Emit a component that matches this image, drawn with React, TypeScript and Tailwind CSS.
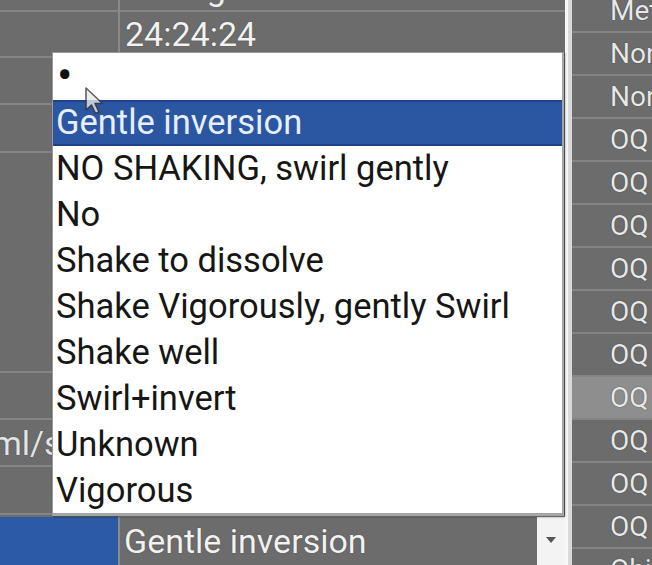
const options = [
  "Gentle inversion",
  "NO SHAKING, swirl gently",
  "No",
  "Shake to dissolve",
  "Shake Vigorously, gently Swirl",
  "Shake well",
  "Swirl+invert",
  "Unknown",
  "Vigorous",
];

const rightCells = [
  "Method",
  "None",
  "None",
  "OQ",
  "OQ",
  "OQ",
  "OQ",
  "OQ",
  "OQ",
  "OQ",
  "OQ",
  "OQ",
  "OQ",
  "Ohio",
];

// left column: [height, text]
const leftRows: [number, string][] = [
  [12, ""],
  [46, ""],
  [47, ""],
  [48, ""],
  [220, ""],
  [47, ""],
  [47, "ml/s"],
  [48, ""],
];

function Cursor() {
  return (
    <svg
      className="absolute left-[84px] top-[86px] opacity-80"
      width="22"
      height="30"
      viewBox="0 0 22 30"
    >
      <path
        d="M2 2 L2 24 L7.5 19 L11.5 27.5 L15 26 L11 17.5 L18.5 17.5 Z"
        fill="#e9e9e9"
        stroke="#3a3a3a"
        strokeWidth="1.6"
        strokeLinejoin="round"
      />
    </svg>
  );
}

export default function App() {
  return (
    <div className="relative w-[652px] h-[565px] overflow-hidden bg-[#6c6c6c] font-['Roboto','Liberation_Sans',sans-serif] text-[34px]">
      <div className="flex h-full">
        {/* left column */}
        <div className="flex flex-col w-[120px] border-r-[2px] border-[#8a8a8a]">
          {leftRows.map(([h, t], i) => (
            <div
              key={i}
              style={{ height: h }}
              className="flex items-center border-b-[2px] border-[#858585] overflow-hidden whitespace-nowrap text-[#e4e4e4] [text-shadow:0_0_1px_#333]"
            >
              {t && <span className="-ml-[8px] leading-none">{t}</span>}
            </div>
          ))}
          <div className="flex-1 mt-[2px] bg-[#2c5aa6]" />
        </div>

        {/* middle column */}
        <div className="flex flex-col w-[445px]">
          <div className="h-[12px] overflow-hidden border-b-[2px] border-[#858585]">
            <div className="-mt-[32px] pl-[5px] leading-[40px] text-[#eeeeee] whitespace-nowrap">
              Mixing method
            </div>
          </div>
          <div className="h-[46px] flex items-center pl-[5px] border-b-[2px] border-[#858585] text-[#f2f2f2] [text-shadow:0_0_1px_#333]">
            24:24:24
          </div>
          <div className="flex-1" />
          <div className="h-[50px] flex border-t-[2px] border-[#8a8a8a]">
            <div className="flex-1 flex items-center pl-[4px] text-[#f2f2f2] [text-shadow:0_0_1px_#333]">
              Gentle inversion
            </div>
            <div className="w-[28px] bg-[#f3f3f3] flex items-start justify-center pt-[20px]">
              <div className="w-0 h-0 border-l-[5px] border-r-[5px] border-t-[6px] border-l-transparent border-r-transparent border-t-[#555555]" />
            </div>
          </div>
        </div>

        {/* divider strip */}
        <div className="w-[7px] bg-[#d9d9d9] border-l-[3px] border-[#f7f7f7]" />

        {/* right column */}
        <div className="flex-1 overflow-hidden">
          <div className="-mt-[10px] flex flex-col">
            {rightCells.map((t, i) => (
              <div
                key={i}
                className={`h-[43px] shrink-0 flex items-center pl-[38px] whitespace-nowrap text-[28px] text-[#e8e8e8] [text-shadow:0_0_1px_#222] border-b-[2px] border-[#848484] ${
                  i === 9 ? "bg-[#8e8e8e]" : ""
                }`}
              >
                {t}
              </div>
            ))}
          </div>
        </div>
      </div>

      {/* open dropdown list */}
      <div className="absolute left-[52px] top-[52px] w-[512px] h-[464px] bg-white border-l border-t border-[#9a9a9a] border-r-[2px] border-b-[3px] border-r-[#a5a5a5] border-b-[#a5a5a5] shadow-[1px_1px_2px_rgba(0,0,0,0.4)] text-[34.5px]">
        <div className="h-[47px] flex items-center pl-[4px] pb-[4px] text-[46px] leading-none text-[#111]">
          •
        </div>
        {options.map((o, i) => (
          <div
            key={o}
            className={`h-[46px] flex items-center pl-[3px] whitespace-nowrap ${
              i === 0
                ? "bg-[#2b56a2] border-y-[2px] border-[#1f4288] text-[#e6eeff]"
                : "text-[#161616]"
            }`}
          >
            {o}
          </div>
        ))}
      </div>

      <Cursor />
    </div>
  );
}
